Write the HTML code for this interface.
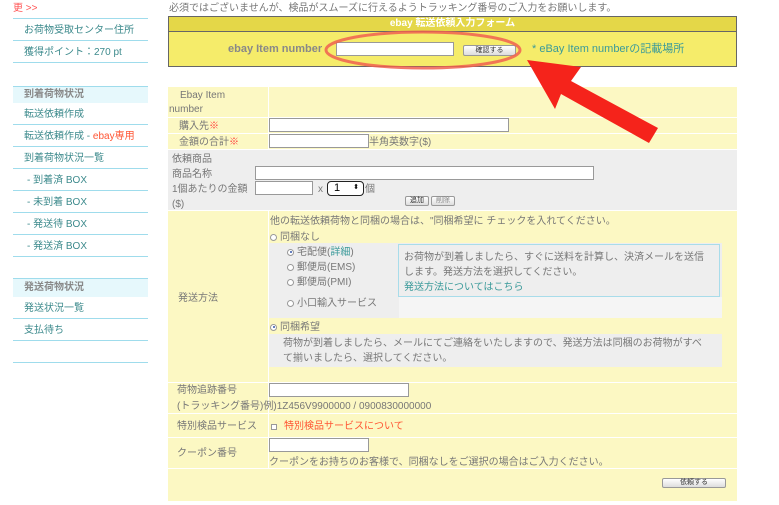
<!DOCTYPE html>
<html><head><meta charset="utf-8"><style>
*{margin:0;padding:0;box-sizing:border-box}
body{width:779px;height:505px;background:#fff;font-family:"Liberation Sans","Noto Sans CJK JP",sans-serif;font-size:10px;line-height:13px;color:#777;position:relative;overflow:hidden}
.a{position:absolute;white-space:nowrap}
.sl{position:absolute;left:13px;width:135px;height:1px;background:#9fdcec}
.si{position:absolute;left:24px;color:#3c8a8c;font-size:10px}
.sh{position:absolute;left:13px;width:135px;background:#e6f8fc;color:#888;font-weight:bold;padding-left:11px;font-size:10px}
.in{position:absolute;background:#fff;border:1px solid #999;height:15px}
.btn{position:absolute;background:linear-gradient(#fff,#ddd);border:1px solid #999;border-radius:2px;font-size:7px;color:#333;text-align:center;line-height:9px;height:11px}
.y{position:absolute;background:#fcf8c3}
.g{position:absolute;background:#eee}
.red{color:#f33}
.rad{display:inline-block;width:7px;height:7px;border:1px solid #999;border-radius:50%;background:#fff;vertical-align:middle;margin-right:3px;position:relative}
.rad.on::after{content:"";position:absolute;left:1.5px;top:1.5px;width:2px;height:2px;border-radius:50%;background:#35a}
</style></head><body>
<!-- sidebar -->
<div class="a red" style="left:13px;top:2px;color:#f55">更 &gt;&gt;</div>
<div class="sl" style="top:18px"></div>
<div class="si" style="top:24px">お荷物受取センター住所</div>
<div class="sl" style="top:40px"></div>
<div class="si" style="top:46px">獲得ポイント：270 pt</div>
<div class="sl" style="top:62px"></div>
<div class="sl" style="top:86px"></div>
<div class="sh" style="top:87px;height:16px;line-height:16px">到着荷物状況</div>
<div class="si" style="top:108px">転送依頼作成</div>
<div class="sl" style="top:124px"></div>
<div class="si" style="top:130px">転送依頼作成 - <span style="color:#f53">ebay専用</span></div>
<div class="sl" style="top:146px"></div>
<div class="si" style="top:152px">到着荷物状況一覧</div>
<div class="sl" style="top:168px"></div>
<div class="si" style="top:174px;left:27px">- 到着済 BOX</div>
<div class="sl" style="top:190px"></div>
<div class="si" style="top:196px;left:27px">- 未到着 BOX</div>
<div class="sl" style="top:212px"></div>
<div class="si" style="top:218px;left:27px">- 発送待 BOX</div>
<div class="sl" style="top:234px"></div>
<div class="si" style="top:240px;left:27px">- 発送済 BOX</div>
<div class="sl" style="top:256px"></div>
<div class="sl" style="top:278px"></div>
<div class="sh" style="top:279px;height:18px;line-height:18px">発送荷物状況</div>
<div class="si" style="top:302px">発送状況一覧</div>
<div class="sl" style="top:318px"></div>
<div class="si" style="top:324px">支払待ち</div>
<div class="sl" style="top:340px"></div>
<div class="sl" style="top:362px"></div>

<!-- top -->
<div class="a" style="left:169px;top:2px">必須ではございませんが、検品がスムーズに行えるようトラッキング番号のご入力をお願いします。</div>
<div class="a" style="left:168px;top:16px;width:569px;height:51px;border:1px solid #666;background:#f5ec6a"></div>
<div class="a" style="left:169px;top:17px;width:567px;height:15px;background:#e4d748;border-bottom:1px solid #666;color:#fff;font-weight:bold;text-align:center;font-size:10px;line-height:14px">ebay 転送依頼入力フォーム</div>
<div class="a" style="left:228px;top:43px;font-weight:bold;color:#888;font-size:11px">ebay Item number</div>
<div class="in" style="left:336px;top:42px;width:118px;height:14px"></div>
<div class="btn" style="left:463px;top:45px;width:53px">確認する</div>
<div class="a" style="left:532px;top:43px;color:#3a9a9a;font-size:11px">* eBay Item numberの記載場所</div>

<!-- main table -->
<div class="y" style="left:168px;top:87px;width:569px;height:62px"></div>
<div class="a" style="left:268px;top:87px;width:1px;height:62px;background:#fff"></div>
<div class="a" style="left:168px;top:117px;width:569px;height:1px;background:#fff"></div>
<div class="a" style="left:168px;top:133px;width:569px;height:1px;background:#fff"></div>
<div class="a" style="left:180px;top:89px">Ebay Item</div>
<div class="a" style="left:169px;top:103px">number</div>
<div class="a" style="left:179px;top:120px">購入先<span class="red">※</span></div>
<div class="in" style="left:269px;top:118px;width:240px;height:14px"></div>
<div class="a" style="left:179px;top:136px">金額の合計<span class="red">※</span></div>
<div class="in" style="left:269px;top:134px;width:100px;height:14px"></div>
<div class="a" style="left:369px;top:136px">半角英数字($)</div>

<div class="g" style="left:168px;top:150px;width:569px;height:60px"></div>
<div class="a" style="left:172px;top:153px">依頼商品</div>
<div class="a" style="left:172px;top:168px">商品名称</div>
<div class="in" style="left:255px;top:166px;width:339px;height:14px"></div>
<div class="a" style="left:172px;top:183px">1個あたりの金額</div>
<div class="a" style="left:172px;top:198px">($)</div>
<div class="in" style="left:255px;top:181px;width:58px;height:14px"></div>
<div class="a" style="left:318px;top:183px">x</div>
<div class="a" style="left:327px;top:181px;width:37px;height:15px;border:1.5px solid #222;border-radius:4px;background:#fff;color:#000;font-size:11px;padding-left:6px;line-height:12px">1<span style="position:absolute;right:4px;top:0;font-size:7px">⬍</span></div>
<div class="a" style="left:365px;top:183px">個</div>
<div class="btn" style="left:405px;top:196px;width:24px;height:10px;line-height:8px">追加</div>
<div class="btn" style="left:431px;top:196px;width:24px;height:10px;line-height:8px;color:#888">削除</div>

<div class="y" style="left:168px;top:211px;width:569px;height:290px"></div>
<div class="a" style="left:268px;top:211px;width:1px;height:257px;background:#fff"></div>
<div class="a" style="left:270px;top:215px">他の転送依頼荷物と同梱の場合は、"同梱希望に チェックを入れてください。</div>
<div class="a" style="left:270px;top:231px"><span class="rad"></span>同梱なし</div>
<div class="g" style="left:269px;top:243px;width:453px;height:75px"></div>
<div class="a" style="left:399px;top:297px;width:323px;height:21px;background:#f5f5f5"></div>
<div class="a" style="left:398px;top:244px;width:322px;height:53px;border:1px solid #a8dcea;background:#eee"></div>
<div class="a" style="left:404px;top:250px;line-height:15px">お荷物が到着しましたら、すぐに送料を計算し、決済メールを送信<br>します。発送方法を選択してください。<br><span style="color:#3a9a9a">発送方法についてはこちら</span></div>
<div class="a" style="left:287px;top:245px;line-height:15px"><span class="rad on"></span>宅配便(<span style="color:#3a9a9a">詳細</span>)<br><span class="rad"></span>郵便局(EMS)<br><span class="rad"></span>郵便局(PMI)</div>
<div class="a" style="left:287px;top:297px"><span class="rad"></span>小口輸入サービス</div>
<div class="a" style="left:178px;top:292px">発送方法</div>
<div class="a" style="left:270px;top:321px"><span class="rad on"></span>同梱希望</div>
<div class="g" style="left:269px;top:334px;width:453px;height:33px"></div>
<div class="a" style="left:283px;top:336px;line-height:15px">荷物が到着しましたら、メールにてご連絡をいたしますので、発送方法は同梱のお荷物がすべ<br>て揃いましたら、選択してください。</div>

<div class="a" style="left:168px;top:382px;width:569px;height:1px;background:#fff"></div>
<div class="a" style="left:177px;top:384px">荷物追跡番号</div>
<div class="in" style="left:269px;top:383px;width:140px;height:14px"></div>
<div class="a" style="left:177px;top:400px">(トラッキング番号)例)1Z456V9900000 / 0900830000000</div>
<div class="a" style="left:168px;top:413px;width:569px;height:1px;background:#fff"></div>
<div class="a" style="left:177px;top:420px">特別検品サービス</div>
<div class="a" style="left:271px;top:424px;width:6px;height:6px;border:1px solid #999;background:#fff"></div>
<div class="a" style="left:284px;top:420px;color:#f53">特別検品サービスについて</div>
<div class="a" style="left:168px;top:437px;width:569px;height:1px;background:#fff"></div>
<div class="a" style="left:177px;top:447px">クーポン番号</div>
<div class="in" style="left:269px;top:438px;width:100px;height:14px"></div>
<div class="a" style="left:269px;top:456px">クーポンをお持ちのお客様で、同梱なしをご選択の場合はご入力ください。</div>
<div class="a" style="left:168px;top:468px;width:569px;height:1px;background:#fff"></div>
<div class="btn" style="left:662px;top:478px;width:64px;height:10px;line-height:8px">依頼する</div>

<!-- annotations -->
<svg class="a" style="left:0;top:0" width="779" height="505">
<ellipse cx="423" cy="50" rx="97" ry="18" fill="none" stroke="#f06050" stroke-width="3" opacity=".85"/>
<polygon points="527,60 581,67 571,81 658,128 649,143 561,94 555,109" fill="#f5231b"/>
</svg>
</body></html>
